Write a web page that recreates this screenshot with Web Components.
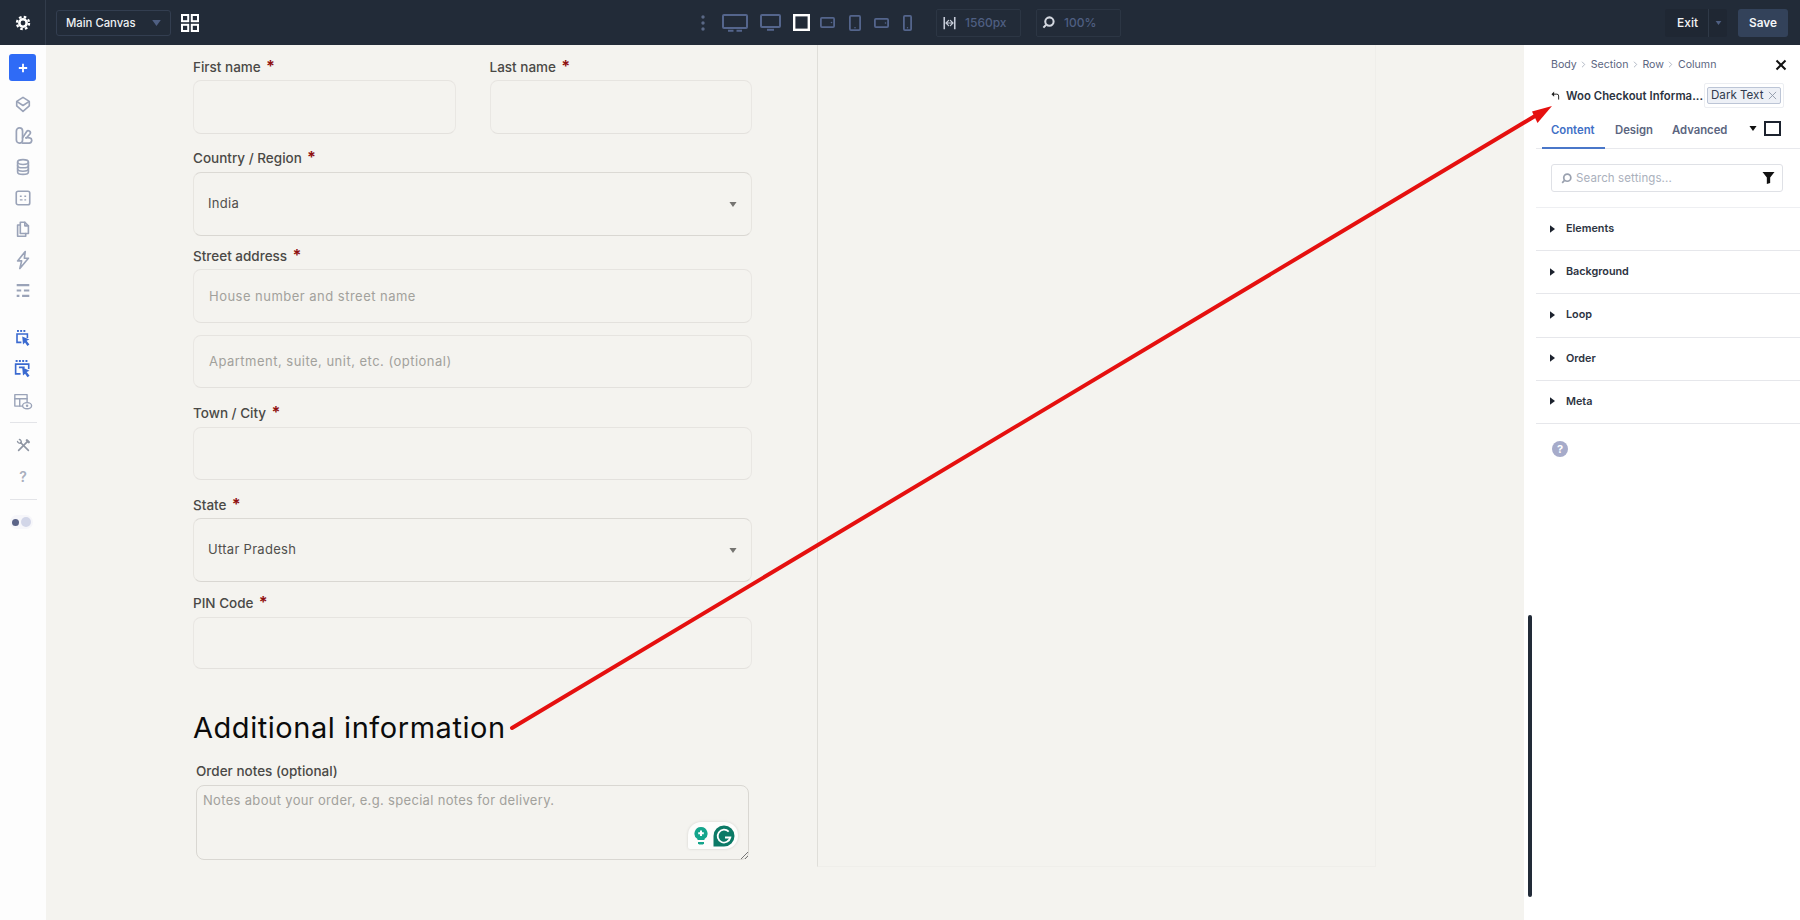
<!DOCTYPE html>
<html lang="en"><head><meta charset="utf-8"><title>Checkout builder</title>
<style>
html,body{margin:0;padding:0;width:1800px;height:920px;overflow:hidden;background:#f4f3ef;font-family:Inter,"Liberation Sans",sans-serif}
</style></head>
<body>
<app-shell>
  <top-bar slot="top"></top-bar>
  <side-rail slot="rail"></side-rail>
  <checkout-canvas slot="canvas">
    <div style="display:flex;gap:34px;margin-top:12px">
      <form-field label="First name" required style="width:262.5px"><text-box h="54"></text-box></form-field>
      <form-field label="Last name" required style="width:262.5px"><text-box h="54"></text-box></form-field>
    </div>
    <form-field label="Country / Region" required g="4" style="margin-top:14px"><select-box h="64">India</select-box></form-field>
    <form-field label="Street address" required style="margin-top:10px">
      <text-box h="54" placeholder="House number and street name"></text-box>
      <text-box h="53" placeholder="Apartment, suite, unit, etc. (optional)" style="margin-top:12px"></text-box>
    </form-field>
    <form-field label="Town / City" required g="4" style="margin-top:15px"><text-box h="53"></text-box></form-field>
    <form-field label="State" required style="margin-top:15px"><select-box h="64">Uttar Pradesh</select-box></form-field>
    <form-field label="PIN Code" required g="4" style="margin-top:11px"><text-box h="52"></text-box></form-field>
    <section-heading style="margin-top:42px">Additional information</section-heading>
    <form-field label="Order notes (optional)" style="margin:17px 0 0 3px;width:553px"><notes-area></notes-area></form-field>
  </checkout-canvas>
  <settings-panel slot="panel">
    <panel-section>Elements</panel-section>
    <panel-section>Background</panel-section>
    <panel-section>Loop</panel-section>
    <panel-section>Order</panel-section>
    <panel-section>Meta</panel-section>
  </settings-panel>
  <annotation-arrow slot="overlay"></annotation-arrow>
</app-shell>
<script>
const S='fill="none" stroke="currentColor" stroke-linecap="round" stroke-linejoin="round"';
const ICONS={
 gear:['0 0 20 20','<circle cx="10" cy="10" r="4.6" fill="none" stroke="currentColor" stroke-width="3.2"/><circle cx="10" cy="10" r="7.6" fill="none" stroke="currentColor" stroke-width="2.8" stroke-dasharray="3.2 2.77"/>'],
 grid:['0 0 18 18',`<g fill="none" stroke="currentColor" stroke-width="2"><rect x="1" y="1" width="6.2" height="6.2"/><rect x="10.8" y="1" width="6.2" height="6.2"/><rect x="1" y="10.8" width="6.2" height="6.2"/><rect x="10.8" y="10.8" width="6.2" height="6.2"/></g>`],
 layers:['0 0 20 20',`<g ${S} stroke-width="1.8"><path d="M10 1.500l7 4.5-7 4.5-7-4.5z"/><path d="M3 6.500v4.500l7 6 7-6V6.500"/></g>`],
 shapes:['0 0 20 20',`<g ${S} stroke-width="1.8"><rect x="2.5" y="2" width="6.5" height="16" rx="3.2"/><path d="M9 12.5l4.2-6.5a2.2 2.2 0 0 1 3.8 2.2L13 12.6"/><path d="M9 18h6.5a2.8 2.8 0 0 0 1-5.5c-1.400-.4-3-.3-4-.1"/></g>`],
 db:['0 0 20 20',`<g ${S} stroke-width="1.8"><ellipse cx="10" cy="4.500" rx="6" ry="2.700"/><path d="M4 4.500v11c0 1.500 2.700 2.700 6 2.700s6-1.200 6-2.700v-11"/><path d="M4 8.200c0 1.500 2.700 2.700 6 2.700s6-1.200 6-2.700M4 12c0 1.500 2.700 2.700 6 2.700s6-1.200 6-2.700"/></g>`],
 box:['0 0 20 20',`<rect x="2.500" y="2.500" width="15" height="15" rx="2" fill="none" stroke="currentColor" stroke-width="1.800"/><path d="M6.500 8h2M11.500 8h2M6.500 12h3M11.500 12h2" stroke="currentColor" stroke-width="1.500"/>`],
 copy:['0 0 20 20',`<g ${S} stroke-width="1.8"><path d="M7 2.500h5l4 4v8.500H7z"/><path d="M12 2.500v4h4"/><path d="M7 5.500H4v12.500h9v-3"/></g>`],
 bolt:['0 0 20 22',`<path ${S} stroke-width="1.8" d="M12.500 1.500L4 12h4.500l-2 8.500L16 9h-4.500z"/>`],
 sliders:['0 0 20 16',`<path d="M3 2h14M3 8h5M11 8h6M3 14h3M9 14h8" stroke="currentColor" stroke-width="2.400" fill="none"/>`],
 cur1:['0 0 20 22',`<g fill="currentColor"><rect x="2.500" y="1" width="2.400" height="2.400"/><rect x="6.500" y="1" width="2.400" height="2.400"/><rect x="10.500" y="1" width="2.400" height="2.400"/><path d="M9 9l9 4-3.500 1.500L18 19l-2.500 2-3-4.500L10 19z"/></g><path d="M8 16.500H2.500V6h13v5" fill="none" stroke="currentColor" stroke-width="2"/>`],
 cur2:['0 0 22 24',`<g fill="currentColor"><rect x="2" y="1" width="2.400" height="2.400"/><rect x="6" y="1" width="2.400" height="2.400"/><rect x="10" y="1" width="2.400" height="2.400"/><rect x="14" y="1" width="2.400" height="2.400"/><path d="M10 10l9 4.200-3.500 1.500 3.500 4.500-2.500 2-3-4.500-2.500 2.300z"/></g><path d="M8 18H2V6h16v6M6 10h7" fill="none" stroke="currentColor" stroke-width="2"/>`],
 layouteye:['0 0 24 22',`<g ${S} stroke-width="1.700" ><path d="M11 16H2V2h15v9"/><path d="M2 7h15M8 7v9"/><ellipse cx="17" cy="15.500" rx="5.500" ry="3.800"/></g><circle cx="17" cy="15.500" r="1.500" fill="currentColor"/>`],
 tools:['0 0 20 20',`<g ${S} stroke-width="2.200"><path d="M6 6l10.500 10.500"/><path d="M3.500 16.500L15.500 4.500"/><path d="M14.500 3l2.500 2.500" stroke-width="3.200"/><path d="M2 4.500a3.600 3.600 0 0 0 4.500 2.500M4.500 2A3.600 3.600 0 0 1 7 6.500" stroke-width="1.800"/></g>`],
 plus:['0 0 12 12','<path d="M6 1v10M1 6h10" stroke="currentColor" stroke-width="2.200"/>'],
 caret:['0 0 10 7','<path d="M0 0h10L5 7z" fill="currentColor"/>'],
 tri:['0 0 6 9','<path d="M0 0l6 4.500L0 9z" fill="currentColor"/>'],
 wide:['0 0 14 16',`<path d="M1 1v14M13 1v14" stroke="currentColor" stroke-width="1.800"/><path d="M3 8h8M6 5L3 8l3 3M8 5l3 3-3 3" ${S} stroke-width="1.400"/>`],
 search:['0 0 14 14',`<circle cx="8" cy="6" r="4.500" fill="none" stroke="currentColor" stroke-width="2.200"/><path d="M4.500 9.500L1.500 12.500" stroke="currentColor" stroke-width="2.200"/>`],
 filter:['0 0 14 13','<path d="M.5 0h13L8.800 6v6l-3.600 1V6z" fill="currentColor"/>'],
 close:['0 0 12 12','<path d="M1.500 1.500l9 9M10.500 1.500l-9 9" stroke="currentColor" stroke-width="2"/>'],
 back:['0 0 10 10',`<path d="M3.500 .5L.5 3.500l3 3z" fill="currentColor"/><path d="M2 3.500h4.500a2 2 0 0 1 2 2V9.500" fill="none" stroke="currentColor" stroke-width="1.100"/>`],
 chev:['0 0 6 8',`<path d="M1.500 1l3 3-3 3" ${S} stroke-width="1"/>`],
 x:['0 0 10 10','<path d="M1 1l8 8M9 1L1 9" stroke="currentColor" stroke-width="1"/>'],
 d1:['0 0 26 18',`<rect x="1" y="1" width="24" height="13" rx="1" fill="none" stroke="currentColor" stroke-width="2"/><path d="M6 16.800h5.500M14.500 16.800H20" stroke="currentColor" stroke-width="2"/>`],
 d2:['0 0 21 17',`<rect x="1" y="1" width="19" height="12" rx="1" fill="none" stroke="currentColor" stroke-width="2"/><path d="M7 15.800h7" stroke="currentColor" stroke-width="2"/>`],
 d3:['0 0 17 17','<rect x="1.200" y="1.200" width="14.600" height="14.600" fill="none" stroke="currentColor" stroke-width="2.400"/>'],
 d4:['0 0 15 11',`<rect x=".9" y=".9" width="13.200" height="9.200" rx="1" fill="none" stroke="currentColor" stroke-width="1.800"/><circle cx="11.500" cy="5.500" r=".8" fill="currentColor"/>`],
 d5:['0 0 12 16',`<rect x=".9" y=".9" width="10.200" height="14.200" rx="1" fill="none" stroke="currentColor" stroke-width="1.800"/><circle cx="6" cy="12.800" r=".8" fill="currentColor"/>`],
 d6:['0 0 15 10',`<rect x=".9" y=".9" width="13.200" height="8.200" rx="1" fill="none" stroke="currentColor" stroke-width="1.800"/><circle cx="11.500" cy="5" r=".8" fill="currentColor"/>`],
 d7:['0 0 9 16',`<rect x=".9" y=".9" width="7.200" height="14.200" rx="1" fill="none" stroke="currentColor" stroke-width="1.800"/><circle cx="4.500" cy="12.800" r=".7" fill="currentColor"/>`],
 dots:['0 0 4 16','<g fill="currentColor"><circle cx="2" cy="2" r="1.700"/><circle cx="2" cy="8" r="1.700"/><circle cx="2" cy="14" r="1.700"/></g>'],
 bulb:['0 0 14 18',`<path d="M7 0a6.500 6.500 0 0 1 3.500 12V13h-7v-1A6.500 6.500 0 0 1 7 0z" fill="currentColor"/><path d="M4 15h6v1.200L9 17.500H5L4 16.200z" fill="currentColor"/><path d="M7 3.500v5.500M4.200 6.200h5.600" stroke="#fff" stroke-width="2"/>`],
 gram:['0 0 22 22',`<path d="M11 .5a10.500 10.500 0 0 1 0 21H.5V11A10.500 10.500 0 0 1 11 .5z" fill="currentColor"/><path d="M15.700 6.700A6.400 6.400 0 1 0 17.300 12.500h-5.300" fill="none" stroke="#fff" stroke-width="1.800"/>`]
};
function svg(n,w,h){const [v,b]=ICONS[n];return `<svg part="i" viewBox="${v}" width="${w}" height="${h||w}" style="display:block;flex:none">${b}</svg>`}
function el(name,html){customElements.define(name,class extends HTMLElement{connectedCallback(){if(this.shadowRoot)return;const r=this.attachShadow({mode:'open'});r.innerHTML=typeof html==='function'?html(this):html;}})}

el('app-shell',`<style>
:host{display:grid;grid-template-columns:46px 1fr 276px;grid-template-rows:45px 875px;width:1800px;height:920px;position:relative;overflow:hidden}
.t{grid-column:1/4;display:block}</style>
<slot name="top" class="t"></slot><slot name="rail"></slot><slot name="canvas"></slot><slot name="panel"></slot><slot name="overlay"></slot>`);

el('ui-icon',h=>`<style>:host{display:inline-flex;flex:none;color:${h.getAttribute('color')||'currentColor'};${h.getAttribute('m')?'margin-left:'+h.getAttribute('m')+'px':''}}</style>${svg(h.getAttribute('name'),+h.getAttribute('w'),+h.getAttribute('h')||+h.getAttribute('w'))}`);

el('top-bar',`<style>
:host{display:flex;align-items:center;height:45px;background:#222b38;color:#fff;font:500 12px Inter,sans-serif;box-sizing:border-box}
.gear{height:45px;border-right:1px solid #323c4b;display:flex;align-items:center;justify-content:center;width:45px;flex:none}
.sel{margin-left:10px;width:115px;height:26px;border:1px solid #333e50;border-radius:3px;box-sizing:border-box;display:flex;align-items:center;padding:0 0 0 9px;color:#eef0f3;font-size:11.300px}
.sel ui-icon{margin-left:auto;margin-right:9px}
.stat{height:28px;width:85px;border:1px solid #2c3644;border-radius:2px;box-sizing:border-box;display:flex;align-items:center;color:#4f5f82;font-size:12px}
.exit{margin-left:auto;width:62px;height:28px;background:#1f2733;border-radius:3px;display:flex;align-items:center;color:#f2f3f5;font-size:12px}
.exit span{margin-left:12px;width:31px}
.exit i{width:1px;height:28px;background:#2f3947}
.save{margin:0 12px 0 11px;width:50px;height:28px;background:#33425a;border-radius:3px;display:flex;align-items:center;justify-content:center;font-weight:600;font-size:11.800px;color:#f4f6f9}
</style>
<div class="gear"><ui-icon name="gear" w="16"></ui-icon></div>
<div class="sel">Main Canvas<ui-icon name="caret" w="9" h="6" color="#4f5f82"></ui-icon></div>
<ui-icon name="grid" w="18" m="10"></ui-icon>
<ui-icon name="dots" w="4" h="16" m="502" color="#5a6885"></ui-icon>
<ui-icon name="d1" w="26" h="18" m="17" color="#54658c"></ui-icon>
<ui-icon name="d2" w="21" h="17" m="12" color="#54658c"></ui-icon>
<ui-icon name="d3" w="17" h="17" m="12" color="#fff"></ui-icon>
<ui-icon name="d4" w="15" h="11" m="10" color="#54658c"></ui-icon>
<ui-icon name="d5" w="12" h="16" m="14" color="#54658c"></ui-icon>
<ui-icon name="d6" w="15" h="10" m="13" color="#54658c"></ui-icon>
<ui-icon name="d7" w="9" h="16" m="14" color="#54658c"></ui-icon>
<div class="stat" style="margin-left:24px"><ui-icon name="wide" w="13" h="14" m="6" color="#c6ccd8"></ui-icon><span style="margin-left:9px">1560px</span></div>
<div class="stat" style="margin-left:15px"><ui-icon name="search" w="13" m="5" color="#d4d8e0"></ui-icon><span style="margin-left:9px">100%</span></div>
<div class="exit"><span>Exit</span><i></i><ui-icon name="caret" w="7" h="4" m="6" color="#4f5f82"></ui-icon></div>
<div class="save">Save</div>`);

el('side-rail',`<style>
:host{display:flex;flex-direction:column;align-items:center;width:46px;height:875px;background:#fdfdfd;box-sizing:border-box;color:#9aa3b8;padding-top:9px}
.add{width:27px;height:27px;background:#2f6bf6;border-radius:3px;color:#fff;display:flex;align-items:center;justify-content:center;flex:none;margin-left:-1px}
.c{height:31px;width:46px;display:flex;align-items:center;justify-content:center;flex:none}
hr{width:27px;margin:0;border:0;border-top:1px solid #e3e4e8;flex:none}
.q{font:600 14px Inter,sans-serif;color:#a9afbd}
.tog{width:23px;height:14px;border-radius:7px;background:#f6f6fa;display:flex;align-items:center;justify-content:space-between;padding:0 2px;box-sizing:border-box;margin:15px 0 0 -3px}
.tog b{width:7px;height:7px;border-radius:50%;background:#5b6488}.tog b+b{background:#d2d6e8;width:10px;height:10px}
</style>
<div class="add"><ui-icon name="plus" w="10"></ui-icon></div>
<div class="c" style="margin-top:8px"><ui-icon name="layers" w="18"></ui-icon></div>
<div class="c"><ui-icon name="shapes" w="19"></ui-icon></div>
<div class="c"><ui-icon name="db" w="18"></ui-icon></div>
<div class="c"><ui-icon name="box" w="18"></ui-icon></div>
<div class="c"><ui-icon name="copy" w="18"></ui-icon></div>
<div class="c"><ui-icon name="bolt" w="18" h="22"></ui-icon></div>
<div class="c"><ui-icon name="sliders" w="18" h="15"></ui-icon></div>
<div class="c" style="margin-top:16px;color:#3a6ad0"><ui-icon name="cur1" w="16" h="18"></ui-icon></div>
<div class="c" style="color:#3a6ad0"><ui-icon name="cur2" w="18" h="20"></ui-icon></div>
<div class="c" style="margin-top:2px"><ui-icon name="layouteye" w="20" h="18"></ui-icon></div>
<hr style="margin-top:5px">
<div class="c" style="margin-top:7px"><ui-icon name="tools" w="15" color="#8f96a3"></ui-icon></div>
<div class="c q">?</div>
<hr style="margin-top:7px">
<div class="tog"><b></b><b></b></div>`);

el('checkout-canvas',`<style>
:host{display:block;height:875px;background:#f4f3ef;padding-left:147px;box-sizing:border-box}
.row{display:flex;width:1183px;height:822px}
.col{width:559px;margin-right:64.500px;flex:none;display:flex;flex-direction:column}
.right{flex:1;border-left:1px solid #dfded9;border-right:1px solid #efeeea;border-bottom:1px solid #efeeea}
</style><div class="row"><div class="col"><slot></slot></div><div class="right"></div></div>`);

el('form-field',h=>`<style>
:host{display:flex;flex-direction:column;flex:none}
.l{height:20px;font:500 13.500px/18px Inter,"Liberation Sans",sans-serif;color:#4a4946;margin-bottom:${h.getAttribute('g')||3}px;white-space:nowrap}
.r{color:#8f1010;font-weight:700;font-size:16px;margin-left:1.500px}
</style><div class="l">${h.getAttribute('label')}${h.hasAttribute('required')?'<span class="r"> *</span>':''}</div><slot></slot>`);

el('text-box',h=>`<style>
:host{display:flex;align-items:center;height:${h.getAttribute('h')}px;box-sizing:border-box;border:1px solid #e9e7e3;border-top-color:#e6e4e0;border-bottom-color:#e3e1dd;border-radius:8px;padding:0 15px 1px;font:400 13px Inter,"Liberation Sans",sans-serif;letter-spacing:.48px;color:#a2a19c}
</style>${h.getAttribute('placeholder')||''}`);

el('select-box',h=>`<style>
:host{display:flex;align-items:center;height:${h.getAttribute('h')}px;box-sizing:border-box;border:1px solid #e7e5e0;border-top-color:#dbd9d4;border-bottom-color:#d9d7d2;border-radius:8px;padding:0 14px;font:400 13px Inter,"Liberation Sans",sans-serif;letter-spacing:.3px;color:#504f4c}
span{flex:1;padding-bottom:2px}
</style><span><slot></slot></span><ui-icon name="caret" w="8" h="5" color="#757471"></ui-icon>`);

el('section-heading',`<style>
:host{display:block;font:400 29px/34px Inter,"Liberation Sans",sans-serif;color:#0b0b0b;white-space:nowrap;letter-spacing:.55px}
</style><slot></slot>`);

el('notes-area',`<style>
:host{display:block;position:relative;height:75px;box-sizing:border-box;border:1px solid #d9d7d2;border-radius:8px;padding:6px 6px;font:400 13px/16px Inter,"Liberation Sans",sans-serif;letter-spacing:.32px;color:#a2a19c}
.g{position:absolute;right:10px;top:36px;width:50px;height:27px;background:#fdfdfc;border-radius:13px 13px 13px 2px;display:flex;align-items:center;gap:5px;padding-left:6px;box-sizing:border-box;box-shadow:0 0 3px #0002}
.rz{position:absolute;right:0;bottom:0;width:8px;height:8px;overflow:hidden}
.rz svg{display:block}
</style>Notes about your order, e.g. special notes for delivery.
<div class="g"><ui-icon name="bulb" w="14" h="18" color="#14a58c"></ui-icon><ui-icon name="gram" w="22" color="#0b7a66"></ui-icon></div>
<div class="rz"><svg width="8" height="8" viewBox="0 0 8 8"><path d="M1 8l7-7M5 8l3-3" stroke="#777" stroke-width="1"/></svg></div>`);

el('settings-panel',`<style>
:host{display:block;height:875px;background:#fff;position:relative;box-sizing:border-box;padding-left:12px;font-family:Inter,"Liberation Sans",sans-serif}
.crumb{display:flex;align-items:center;height:20px;margin:9px 0 0 15px;font-size:10.600px;color:#5b6580;gap:4.500px;position:relative}
.crumb ui-icon{color:#a5acbb}
.x{position:absolute;right:13px;top:5px}
.x ui-icon{color:#111}
.head{display:flex;align-items:center;height:25px;margin:9px 0 0 15px}
.ttl{margin-left:6px;width:138px;font-size:11.300px;font-weight:600;color:#2c3340;white-space:nowrap;letter-spacing:.05px}
.tagwrap{width:80px;height:25px;box-sizing:border-box;border:1px solid #eceef2;border-radius:2px;display:flex;align-items:center;justify-content:center}
.tag{display:flex;align-items:center;gap:5px;width:74px;height:17px;box-sizing:border-box;background:#edf0f6;border:1px solid #bcc5d6;border-radius:2px;font-size:11.600px;color:#303a4d;padding-left:3px;white-space:nowrap;margin-top:-1px}
.tabs{display:flex;align-items:center;height:41px;border-bottom:1px solid #e8e9ed;font-size:11.300px;font-weight:600;color:#5b6580;box-sizing:border-box;position:relative}
.tab{height:41px;line-height:44px;box-sizing:border-box}
.on{width:63px;border-bottom:2px solid #4a77c9;color:#3f70c6;padding-left:9px;margin-left:6px}
.sq{width:17px;height:15px;border:2px solid #1c222e;box-sizing:border-box;margin:1px 19px 0 7px}
.search{display:flex;align-items:center;height:28px;width:232px;box-sizing:border-box;margin:15px 0 15px 15px;border:1px solid #dfe1e6;border-radius:3px;padding:0 7px 0 9px;color:#aab0bc;font-size:11.500px;gap:4px;letter-spacing:.1px}
.help{width:16px;height:16px;border-radius:50%;background:#a6abca;color:#fff;font:700 11px/16px Inter,sans-serif;text-align:center;margin:17px 0 0 16px}
.sb{position:absolute;left:4px;top:570px;width:4px;height:282px;background:#222b38;border-radius:2px}
.sep{border-top:1px solid #eeeff2}
</style>
<div class="crumb">Body<ui-icon name="chev" w="5" h="7"></ui-icon>Section<ui-icon name="chev" w="5" h="7"></ui-icon>Row<ui-icon name="chev" w="5" h="7"></ui-icon>Column<span class="x"><ui-icon name="close" w="12"></ui-icon></span></div>
<div class="head"><ui-icon name="back" w="9" color="#222"></ui-icon><span class="ttl">Woo Checkout Informa...</span><div class="tagwrap"><div class="tag">Dark Text<ui-icon name="x" w="9" color="#8f97a8"></ui-icon></div></div></div>
<div class="tabs"><div class="tab on">Content</div><div class="tab" style="margin-left:10px">Design</div><div class="tab" style="margin-left:19px">Advanced</div><ui-icon name="caret" w="8" h="5" color="#111" style="margin-left:auto"></ui-icon><div class="sq"></div></div>
<div class="search"><ui-icon name="search" w="11" color="#9aa1af"></ui-icon><span>Search settings...</span><ui-icon name="filter" w="13" h="12" color="#111" style="margin-left:auto"></ui-icon></div>
<div class="sep"></div>
<slot></slot>
<div class="help">?</div>
<div class="sb"></div>`);

el('panel-section',`<style>
:host{display:flex;align-items:center;height:43.200px;box-sizing:border-box;border-bottom:1px solid #e6e7eb;padding:0 0 1px 14px;font:600 10.800px Inter,"Liberation Sans",sans-serif;color:#2d3442;gap:11px}
</style><ui-icon name="tri" w="5" h="8" color="#1c222e"></ui-icon><slot></slot>`);

el('annotation-arrow',`<style>
:host{position:absolute;left:0;top:0;width:1800px;height:920px;pointer-events:none}
svg{display:block}
</style><svg width="1800" height="920" viewBox="0 0 1800 920"><path d="M512 728L1540 113" stroke="#e5100f" stroke-width="4" stroke-linecap="round"/><path d="M1552 106L1532 111.500L1537.500 123z" fill="#e5100f"/></svg>`);
</script>
</body></html>
